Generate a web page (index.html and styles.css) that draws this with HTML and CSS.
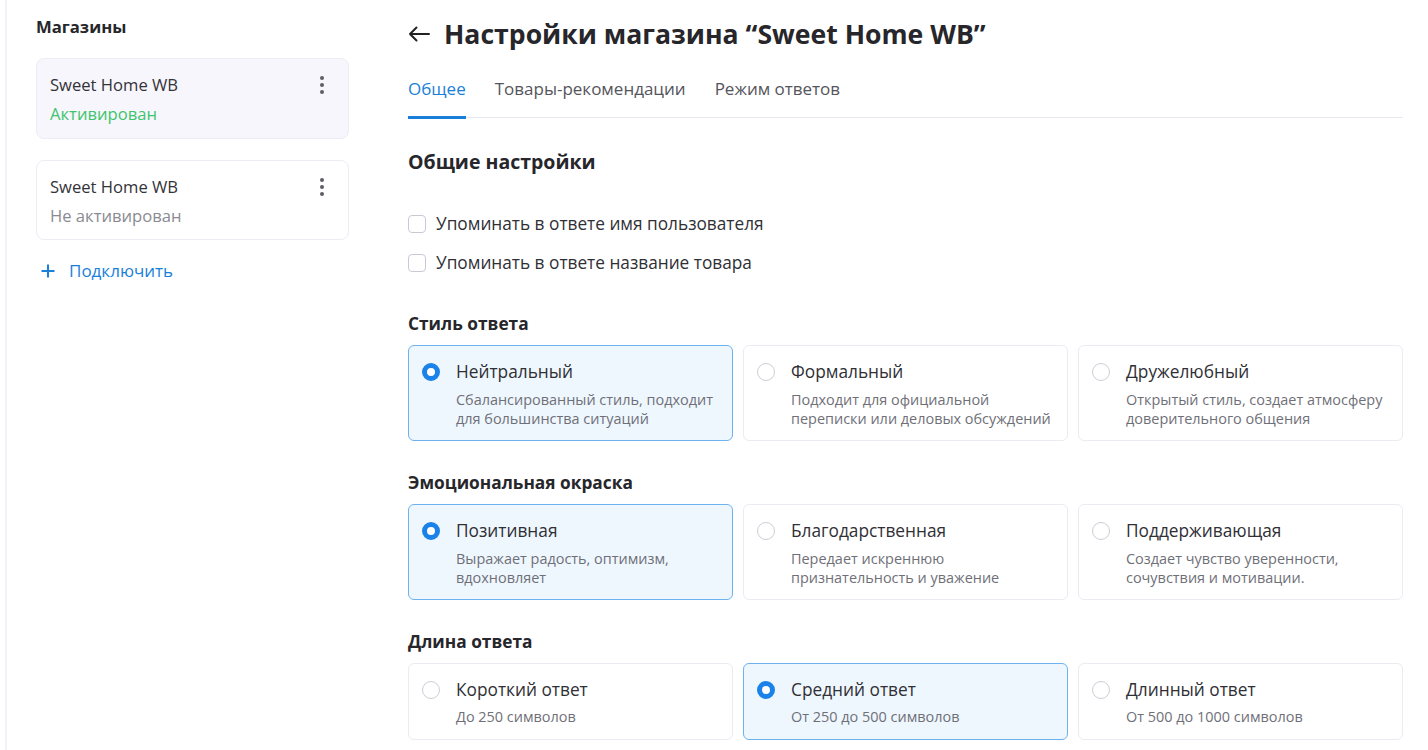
FILE: index.html
```html
<!DOCTYPE html>
<html lang="ru">
<head>
<meta charset="utf-8">
<title>Настройки магазина</title>
<link rel="stylesheet" href="styles.css">
</head>
<body>
<div class="page">
  <aside class="sidebar">
    <h2 class="side-title">Магазины</h2>
    <div class="shop shop-active">
      <div class="shop-info">
        <div class="shop-name">Sweet Home WB</div>
        <div class="shop-status status-on">Активирован</div>
      </div>
      <span class="kebab"><i></i><i></i><i></i></span>
    </div>
    <div class="shop">
      <div class="shop-info">
        <div class="shop-name">Sweet Home WB</div>
        <div class="shop-status status-off">Не активирован</div>
      </div>
      <span class="kebab"><i></i><i></i><i></i></span>
    </div>
    <a class="connect" href="#">
      <svg width="14" height="14" viewBox="0 0 14 14"><path d="M7 0.5v13M0.5 7h13" stroke="#1a7fd9" stroke-width="2" fill="none"/></svg>
      <span>Подключить</span>
    </a>
  </aside>

  <main class="main">
    <div class="header">
      <svg class="back" width="22" height="16" viewBox="0 0 22 16"><path d="M21 8H2M8.5 1.5L2 8l6.5 6.5" stroke="#222" stroke-width="2" fill="none" stroke-linecap="round" stroke-linejoin="round"/></svg>
      <h1 class="title">Настройки магазина “Sweet Home WB”</h1>
    </div>

    <nav class="tabs">
      <span class="tab tab-active">Общее</span>
      <span class="tab">Товары-рекомендации</span>
      <span class="tab">Режим ответов</span>
    </nav>

    <h3 class="section-title">Общие настройки</h3>

    <div class="checks">
      <label class="check"><span class="box"></span>Упоминать в ответе имя пользователя</label>
      <label class="check"><span class="box"></span>Упоминать в ответе название товара</label>
    </div>

    <h4 class="group-title first">Стиль ответа</h4>
    <div class="options">
      <div class="option selected">
        <span class="radio"></span>
        <div class="opt-text">
          <div class="opt-title">Нейтральный</div>
          <div class="opt-desc">Сбалансированный стиль, подходит<br>для большинства ситуаций</div>
        </div>
      </div>
      <div class="option">
        <span class="radio"></span>
        <div class="opt-text">
          <div class="opt-title">Формальный</div>
          <div class="opt-desc">Подходит для официальной<br>переписки или деловых обсуждений</div>
        </div>
      </div>
      <div class="option">
        <span class="radio"></span>
        <div class="opt-text">
          <div class="opt-title">Дружелюбный</div>
          <div class="opt-desc">Открытый стиль, создает атмосферу<br>доверительного общения</div>
        </div>
      </div>
    </div>

    <h4 class="group-title">Эмоциональная окраска</h4>
    <div class="options">
      <div class="option selected">
        <span class="radio"></span>
        <div class="opt-text">
          <div class="opt-title">Позитивная</div>
          <div class="opt-desc">Выражает радость, оптимизм,<br>вдохновляет</div>
        </div>
      </div>
      <div class="option">
        <span class="radio"></span>
        <div class="opt-text">
          <div class="opt-title">Благодарственная</div>
          <div class="opt-desc">Передает искреннюю<br>признательность и уважение</div>
        </div>
      </div>
      <div class="option">
        <span class="radio"></span>
        <div class="opt-text">
          <div class="opt-title">Поддерживающая</div>
          <div class="opt-desc">Создает чувство уверенности,<br>сочувствия и мотивации.</div>
        </div>
      </div>
    </div>

    <h4 class="group-title">Длина ответа</h4>
    <div class="options short">
      <div class="option">
        <span class="radio"></span>
        <div class="opt-text">
          <div class="opt-title">Короткий ответ</div>
          <div class="opt-desc">До 250 символов</div>
        </div>
      </div>
      <div class="option selected">
        <span class="radio"></span>
        <div class="opt-text">
          <div class="opt-title">Средний ответ</div>
          <div class="opt-desc">От 250 до 500 символов</div>
        </div>
      </div>
      <div class="option">
        <span class="radio"></span>
        <div class="opt-text">
          <div class="opt-title">Длинный ответ</div>
          <div class="opt-desc">От 500 до 1000 символов</div>
        </div>
      </div>
    </div>
  </main>
</div>
</body>
</html>
```

FILE: styles.css
```css
* { box-sizing: border-box; }
html, body { margin: 0; padding: 0; background: #fff; }
body {
  font-family: "Open Sans", "Noto Sans", sans-serif;
  color: #2b2b30;
  width: 1428px;
  height: 750px;
  overflow: hidden;
}
.page {
  display: flex;
  padding-left: 5px;
  min-height: 750px;
}
.sidebar {
  width: 403px;
  flex: none;
  border-left: 2px solid #f1f1f8;
  padding: 17px 0 0 29px;
}
.side-title {
  margin: 0 0 21px;
  font-size: 16.7px;
  line-height: 20px;
  font-weight: 700;
  color: #26262b;
}
.shop {
  width: 313px;
  height: 81px;
  border: 1px solid #ececf4;
  border-radius: 8px;
  padding: 13px 14px 13px 13px;
  display: flex;
  justify-content: space-between;
  margin-bottom: 21px;
  background: #fff;
}
.shop + .shop { height: 80px; margin-bottom: 20px; }
.shop-active { background: #f6f6fc; }
.shop-name {
  font-size: 16.6px;
  line-height: 26px;
  color: #333338;
}
.shop-status {
  font-size: 16.6px;
  line-height: 32px;
}
.status-on { color: #3ec46d; }
.status-off { color: #8a8a92; }
.kebab {
  display: flex;
  flex-direction: column;
  gap: 3px;
  padding: 4px 10px 0 0;
}
.kebab i {
  display: block;
  width: 4px;
  height: 4px;
  border-radius: 50%;
  background: #5e5e66;
}
.connect {
  display: flex;
  align-items: center;
  gap: 14px;
  padding-left: 5px;
  color: #1a7fd9;
  text-decoration: none;
  font-size: 17px;
  line-height: 22px;
}
.main {
  width: 995px;
  flex: none;
  padding-top: 18px;
}
.header {
  display: flex;
  align-items: center;
  gap: 14px;
  height: 32px;
}
.back { flex: none; }
.title {
  margin: 0;
  font-size: 26.6px;
  line-height: 32px;
  font-weight: 700;
  color: #26262b;
}
.tabs {
  margin-top: 27px;
  display: flex;
  gap: 29px;
  border-bottom: 1px solid #e7e7f1;
  height: 41px;
}
.tab {
  font-size: 17px;
  line-height: 24px;
  color: #55555c;
  height: 41px;
}
.tab-active {
  color: #1a7fd9;
  border-bottom: 3px solid #1a7fd9;
  height: 42px;
}
.section-title {
  margin: 32px 0 0;
  font-size: 19.5px;
  line-height: 24px;
  font-weight: 700;
  color: #26262b;
}
.checks {
  margin-top: 38px;
  display: flex;
  flex-direction: column;
  gap: 15px;
}
.check {
  display: flex;
  align-items: center;
  gap: 10px;
  font-size: 17.25px;
  line-height: 24px;
  color: #2f2f35;
}
.box {
  width: 18px;
  height: 18px;
  border: 1.5px solid #c9c9d6;
  border-radius: 4px;
  background: #fff;
}
.group-title {
  margin: 31px 0 10px;
  font-size: 17.3px;
  line-height: 22px;
  font-weight: 700;
  color: #26262b;
}
.group-title.first { margin-top: 38px; }
.options {
  display: grid;
  grid-template-columns: repeat(3, 1fr);
  gap: 10px;
}
.option {
  height: 96px;
  border: 1px solid #ebebf3;
  border-radius: 6px;
  padding: 15px 13px 12px;
  display: flex;
  gap: 16px;
  background: #fff;
}
.options.short .option { height: 77px; }
.option.selected {
  background: #eef7fe;
  border-color: #6db2ef;
}
.radio {
  flex: none;
  width: 18px;
  height: 18px;
  margin-top: 2px;
  border-radius: 50%;
  border: 1.5px solid #cdcdd8;
  background: #fff;
}
.selected .radio {
  border: 5px solid #1a82e8;
}
.opt-title {
  font-size: 17.3px;
  line-height: 22px;
  color: #2f2f35;
}
.opt-desc {
  margin-top: 7px;
  font-size: 14.45px;
  line-height: 19px;
  color: #6f6f78;
}
.short .opt-desc { margin-top: 6px; }
```
